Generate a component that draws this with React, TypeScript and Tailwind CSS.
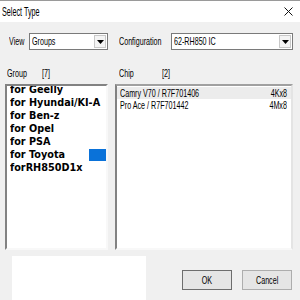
const label = "inline-block origin-left scale-x-[0.65] whitespace-nowrap text-[11px] leading-none text-black";

function Combo({ value, width }: { value: string; width: string }) {
  return (
    <div className={`${width} flex h-[17px] items-center border border-[#7a7a7a] bg-white`}>
      <span className={`${label} ml-[2px] flex-1`}>{value}</span>
      <div className="mr-[1px] flex h-[13px] w-[12px] items-center justify-center border border-[#c8c8c8] bg-[#f4f4f4]">
        <svg width="7" height="4" viewBox="0 0 7 4">
          <path d="M0 0h7L3.5 4z" fill="#000" />
        </svg>
      </div>
    </div>
  );
}

const groups = ["for Geelly", "for Hyundai/KI-A", "for Ben-z", "for Opel", "for PSA", "for Toyota", "forRH850D1x"];

const chips = [
  { name: "Camry V70 / R7F701406", size: "4Kx8", active: true },
  { name: "Pro Ace / R7F701442", size: "4Mx8", active: false },
];

export default function App() {
  return (
    <div className="flex h-[300px] w-[300px] flex-col overflow-hidden bg-[#f0f0f0] font-['Liberation_Sans',sans-serif]">
      <div className="flex h-[22px] items-center justify-between border-t border-[#9a9a9a] bg-white pl-[2px] pr-[7px]">
        <span className="inline-block origin-left scale-x-[0.6] whitespace-nowrap text-[12px] leading-none">Select Type</span>
        <svg width="9" height="9" viewBox="0 0 9 9">
          <path d="M0.5 0.5l8 8M8.5 0.5l-8 8" stroke="#111" strokeWidth="1" />
        </svg>
      </div>

      <div className="mt-[11px] flex h-[17px] items-center">
        <span className={`${label} ml-[9px] w-[20px]`}>View</span>
        <Combo value="Groups" width="w-[79px]" />
        <span className={`${label} ml-[11px] w-[52px]`}>Configuration</span>
        <Combo value="62-RH850 IC" width="w-[122px]" />
      </div>

      <div className="mt-[18px] flex h-[10px] items-center">
        <span className={`${label} ml-[7px] w-[35px]`}>Group</span>
        <span className={`${label} w-[77px]`}>[7]</span>
        <span className={`${label} w-[43px]`}>Chip</span>
        <span className={label}>[2]</span>
      </div>

      <div className="mt-[6px] flex h-[166px] gap-[7px] pl-[5px]">
        <div className="w-[103px] overflow-hidden border-2 border-b-[#f8f8f8] border-l-[#828282] border-r-[#f8f8f8] border-t-[#828282] bg-white">
          <div className="-mt-[3px] flex flex-col pl-[3px] font-['DejaVu_Sans',sans-serif]">
            {groups.map((g) => (
              <div key={g} className="flex h-[13px] items-center">
                <span className="inline-block w-[79px] origin-left scale-x-[0.88] whitespace-nowrap text-[11px] font-bold leading-none text-black">{g}</span>
                {g === "for Toyota" && <div className="ml-[6px] h-[12px] w-[18px] bg-[#0a72d9]" />}
              </div>
            ))}
          </div>
        </div>
        <div className="w-[178px] border-2 border-b-[#f8f8f8] border-l-[#828282] border-r-[#e4e4e4] border-t-[#a0a0a0] bg-white pt-[1px]">
          {chips.map((c) => (
            <div key={c.name} className={`flex h-[12px] items-center justify-between pl-[3px] pr-[4px] ${c.active ? "bg-[#ececec]" : ""}`}>
              <span className={label}>{c.name}</span>
              <span className="inline-block origin-right scale-x-[0.65] whitespace-nowrap text-[11px] leading-none">{c.size}</span>
            </div>
          ))}
        </div>
      </div>

      <div className="mt-[6px] flex flex-1 items-start">
        <div className="ml-[12px] h-full w-[134px] bg-white" />
        <button className="ml-[36px] mt-[14px] flex h-[20px] w-[50px] items-center justify-center border border-[#6d6d6d] bg-[#e5e5e5]">
          <span className="inline-block scale-x-[0.65] text-[11px] leading-none">OK</span>
        </button>
        <button className="ml-[10px] mt-[14px] flex h-[20px] w-[50px] items-center justify-center border border-[#adadad] bg-[#e5e5e5]">
          <span className="inline-block scale-x-[0.65] text-[11px] leading-none">Cancel</span>
        </button>
      </div>
    </div>
  );
}
